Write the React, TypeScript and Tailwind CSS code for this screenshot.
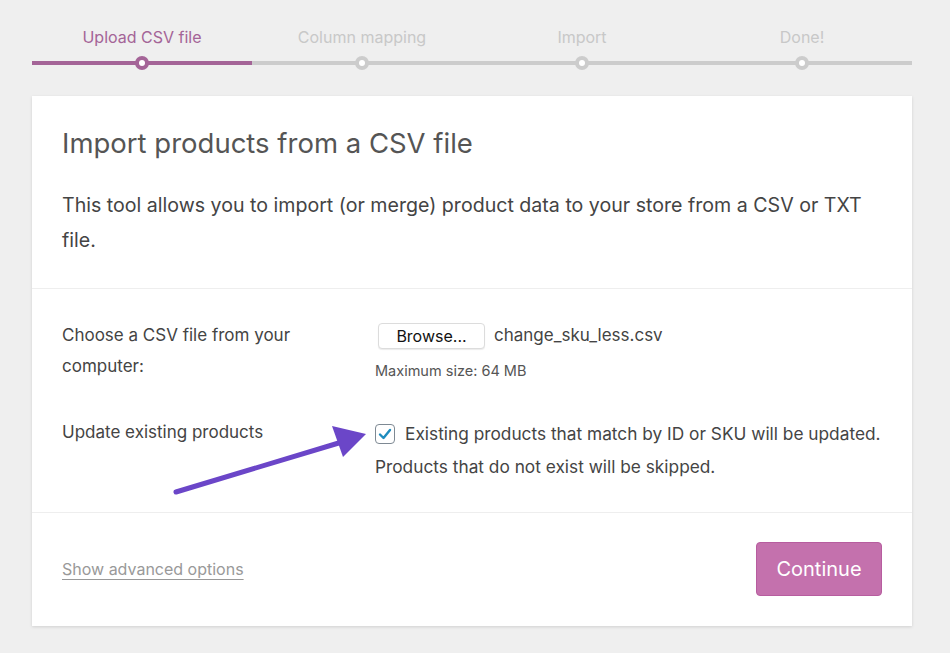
import React from "react";

const steps = [
  { label: "Upload CSV file", active: true },
  { label: "Column mapping", active: false },
  { label: "Import", active: false },
  { label: "Done!", active: false },
];

export default function App() {
  return (
    <div
      className="min-h-[653px] w-[950px] bg-[#efefef] pl-[32px] pt-[26px] text-[#444]"
      style={{ fontFamily: 'Inter, "Liberation Sans", Arial, sans-serif' }}
    >
      {/* stepper */}
      <div className="flex w-[880px]">
        {steps.map((s) => (
          <div key={s.label} className="flex w-[220px] flex-col items-center">
            <div
              className={`h-[22px] text-[16px] leading-[22px] ${
                s.active ? "text-[#a46497]" : "text-[#c8c8c8]"
              }`}
            >
              {s.label}
            </div>
            <div className="relative mt-[8px] h-[14px] w-full">
              <div
                className={`absolute left-0 right-0 top-[5px] h-[4px] ${
                  s.active ? "bg-[#a46497]" : "bg-[#cccccc]"
                }`}
              />
              <div
                className={`absolute left-[103px] top-0 flex h-[14px] w-[14px] items-center justify-center rounded-full ${
                  s.active ? "bg-[#a46497]" : "bg-[#cccccc]"
                }`}
              >
                <div className="h-[6px] w-[6px] rounded-full bg-white" />
              </div>
            </div>
          </div>
        ))}
      </div>

      {/* card */}
      <div className="relative mt-[26px] w-[880px] bg-white shadow-[0_1px_3px_rgba(0,0,0,0.13)]">
        <div className="border-b border-[#eeeeee] px-[30px] pb-[30px] pt-[29px]">
          <h2 className="text-[27.5px] leading-[36px] text-[#555]">
            Import products from a CSV file
          </h2>
          <p className="mt-[27px] text-[19.6px] leading-[35px] text-[#444]">
            This tool allows you to import (or merge) product data to your store from a CSV or TXT file.
          </p>
        </div>

        <div className="border-b border-[#eeeeee] px-[30px] pb-[29px] pt-[31px] text-[17px] text-[#444]">
          <div className="flex">
            <div className="w-[313px] pr-[60px] leading-[31px]">
              Choose a CSV file from your computer:
            </div>
            <div>
              <div className="flex h-[31px] items-center">
                <div className="ml-[3px] flex h-[26px] w-[107px] items-center justify-center rounded-[4px] border border-[#dcdcdc] bg-white text-[16px] text-[#111] shadow-[0_1px_1px_rgba(0,0,0,0.08)]">
                  Browse...
                </div>
                <span className="ml-[9px] text-[17px] text-[#444]">change_sku_less.csv</span>
              </div>
              <div className="mt-[12px] text-[14.5px] leading-[16px] text-[#555]">
                Maximum size: 64 MB
              </div>
            </div>
          </div>

          <div className="mt-[35px] flex">
            <div className="w-[313px] leading-[31px]">Update existing products</div>
            <div className="leading-[33px]">
              <div className="flex items-center">
                <div className="flex h-[20px] w-[20px] items-center justify-center rounded-[4px] border border-[#7e8993] bg-white">
                  <svg width="14" height="12" viewBox="0 0 14 12">
                    <path
                      d="M2 6.5 L5.5 10 L12 2"
                      fill="none"
                      stroke="#1e8cbe"
                      strokeWidth="2.4"
                      strokeLinecap="round"
                      strokeLinejoin="round"
                    />
                  </svg>
                </div>
                <span className="ml-[10px] text-[17.3px]">
                  Existing products that match by ID or SKU will be updated.
                </span>
              </div>
              <div className="text-[17.3px]">Products that do not exist will be skipped.</div>
            </div>
          </div>
        </div>

        <div className="flex items-center justify-between px-[30px] pb-[30px] pt-[29px]">
          <span className="text-[16px] text-[#999] underline decoration-[#999] underline-offset-[4px]">
            Show advanced options
          </span>
          <div className="flex h-[54px] w-[126px] items-center justify-center rounded-[4px] border border-[#b75d9f] bg-[#c471ad] text-[20px] text-white">
            Continue
          </div>
        </div>

        {/* arrow */}
        <svg
          className="pointer-events-none absolute left-0 top-0"
          width="880"
          height="531"
          viewBox="0 0 880 531"
        >
          <line x1="144" y1="396" x2="310" y2="346" stroke="#6b46c8" strokeWidth="5" strokeLinecap="round" />
          <polygon points="334,338 300,330 311,361" fill="#6b46c8" />
        </svg>
      </div>
    </div>
  );
}
